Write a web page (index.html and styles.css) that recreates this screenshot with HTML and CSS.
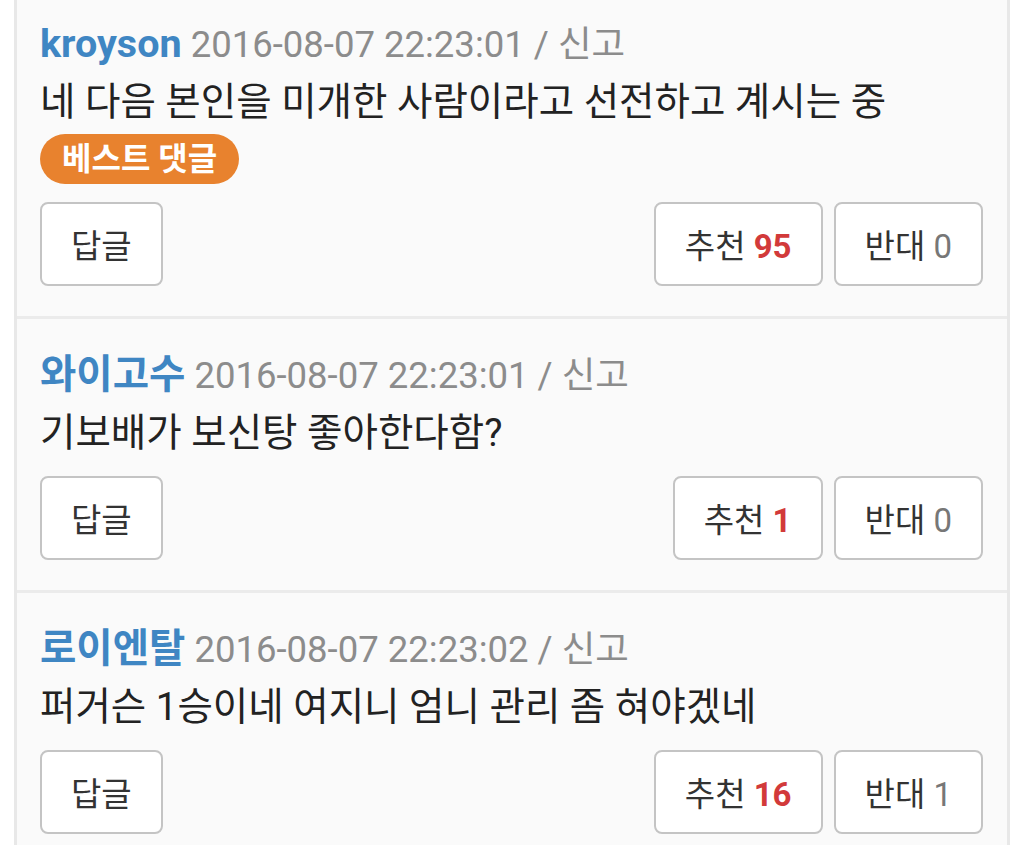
FILE: index.html
```html
<!DOCTYPE html>
<html lang="ko">
<head>
<meta charset="utf-8">
<link rel="stylesheet" href="styles.css">
</head>
<body>
<div class="panel">
  <div class="comment first">
    <div class="meta"><span class="name">kroyson</span> <span class="time">2016-08-07 22:23:01 / 신고</span></div>
    <div class="text">네 다음 본인을 미개한 사람이라고 선전하고 계시는 중</div>
    <div class="badge">베스트 댓글</div>
    <div class="actions">
      <button class="btn">답글</button>
      <div class="votes">
        <button class="btn">추천 <b class="up">95</b></button>
        <button class="btn">반대 <span class="down">0</span></button>
      </div>
    </div>
  </div>
  <div class="comment">
    <div class="meta"><span class="name">와이고수</span> <span class="time">2016-08-07 22:23:01 / 신고</span></div>
    <div class="text">기보배가 보신탕 좋아한다함?</div>
    <div class="actions">
      <button class="btn">답글</button>
      <div class="votes">
        <button class="btn">추천 <b class="up">1</b></button>
        <button class="btn">반대 <span class="down">0</span></button>
      </div>
    </div>
  </div>
  <div class="comment">
    <div class="meta"><span class="name">로이엔탈</span> <span class="time">2016-08-07 22:23:02 / 신고</span></div>
    <div class="text">퍼거슨 1승이네 여지니 엄니 관리 좀 혀야겠네</div>
    <div class="actions">
      <button class="btn">답글</button>
      <div class="votes">
        <button class="btn">추천 <b class="up">16</b></button>
        <button class="btn">반대 <span class="down">1</span></button>
      </div>
    </div>
  </div>
</div>
</body>
</html>
```
FILE: styles.css
```css
html, body {
  margin: 0;
  padding: 0;
  background: #ffffff;
  overflow: hidden;
}
body {
  font-family: "Roboto", "Noto Sans CJK KR", sans-serif;
  color: #222222;
}
.panel {
  box-sizing: border-box;
  margin: -12px 0 0 14px;
  width: 996px;
  background: #fafafa;
  border-left: 3px solid #e8e8e8;
  border-right: 3px solid #e8e8e8;
}
.comment {
  padding: 27px 24px 30px 23px;
  border-bottom: 3px solid #ebebeb;
}
.meta {
  height: 58px;
  font-size: 36.5px;
  line-height: 58px;
  white-space: nowrap;
  overflow: hidden;
}
.name {
  color: #3f86c3;
  font-weight: 700;
  font-size: 39.5px;
}
.time {
  color: #8c8c8c;
}
.text {
  height: 58px;
  font-size: 38.5px;
  line-height: 58px;
  color: #222222;
}
.badge {
  display: inline-block;
  margin-top: 3px;
  height: 50px;
  line-height: 50px;
  padding: 0 22px;
  border-radius: 25px;
  background: #e8822e;
  color: #ffffff;
  font-weight: 700;
  font-size: 32px;
}
.actions {
  display: flex;
  justify-content: space-between;
  margin-top: 14px;
}
.first .actions {
  margin-top: 18px;
}
.votes {
  display: flex;
  gap: 11px;
}
.btn {
  box-sizing: border-box;
  height: 84px;
  padding: 0 29px;
  background: #ffffff;
  border: 2px solid #c4c4c4;
  border-radius: 8px;
  font-family: "Roboto", "Noto Sans CJK KR", sans-serif;
  font-size: 33px;
  color: #333333;
}
.up {
  color: #d23a3a;
  font-weight: 700;
}
.down {
  color: #777777;
}
```
